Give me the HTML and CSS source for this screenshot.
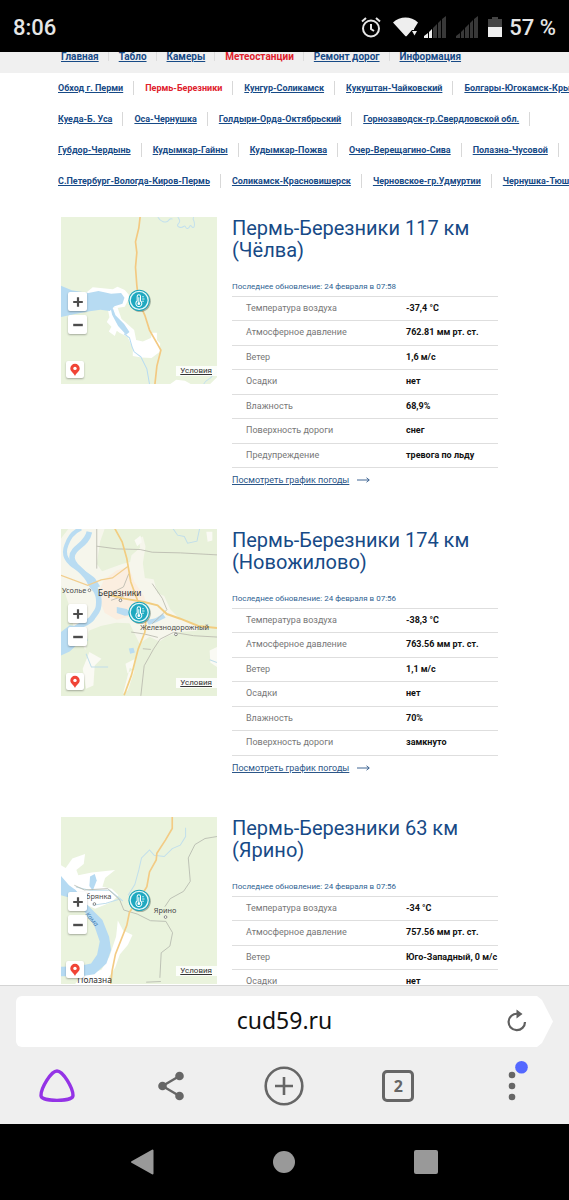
FILE: index.html
```html
<!DOCTYPE html>
<html lang="ru">
<head>
<meta charset="utf-8">
<meta name="viewport" content="width=device-width, initial-scale=1">
<title>Метеостанции</title>
<link rel="stylesheet" href="styles.css">
</head>
<body>
<svg class="defs" aria-hidden="true">
  <symbol id="marker" viewBox="0 0 72 72">
    <circle cx="38" cy="38" r="32" fill="#6b7b70" opacity=".55"/>
    <circle cx="35" cy="35" r="32" fill="#1fa5b9"/>
    <circle cx="35" cy="35" r="27" fill="#1fa9c0" stroke="#e4f8fa" stroke-width="4"/>
    <path d="M29 37V23a5 5 0 0 1 10 0v14a9 9 0 1 1-10 0Z" fill="none" stroke="#fff" stroke-width="3"/>
    <path d="M34 26v18" stroke="#fff" stroke-width="3"/>
    <circle cx="34" cy="45" r="4" fill="#fff"/>
    <path d="M44 24h5M44 31h7M44 38h5" stroke="#d6f3f6" stroke-width="3"/>
  </symbol>
  <symbol id="pin" viewBox="0 0 12 14">
    <path d="M6 0.8a4.7 4.7 0 0 1 4.7 4.7C10.700 8.500 7.500 9.500 6 13C4.500 9.500 1.300 8.500 1.300 5.500A4.700 4.700 0 0 1 6 .8Z" fill="#f04436"/>
    <circle cx="6" cy="5.400" r="1.700" fill="#fff"/>
  </symbol>
  <symbol id="plus" viewBox="0 0 10 10"><path d="M5 .2v9.600M.2 5h9.600" stroke="#4d4d4d" stroke-width="2.200"/></symbol>
  <symbol id="minus" viewBox="0 0 10 10"><path d="M.2 5h9.600" stroke="#4d4d4d" stroke-width="2.400"/></symbol>
  <symbol id="arrow" viewBox="0 0 13 6"><path d="M0 3h12M9.500 .8 12.300 3 9.500 5.200" fill="none" stroke="#2b5688" stroke-width=".9"/></symbol>
</svg>

<header class="status">
  <time class="clock">8:06</time>
  <div class="indicators">
    <svg class="i-alarm" viewBox="0 0 20 22"><g fill="none" stroke="#e6e6e6" stroke-width="2"><circle cx="10" cy="12.500" r="8"/><path d="M10 8v5l3 2M1 5.500 5 2M19 5.500 15 2"/></g></svg>
    <svg class="i-wifi" viewBox="0 0 25 20"><path d="M0 5.500C7-1.200 18-1.200 25 5.500L21 12v1h-2l-5.500 6.300h-1Z" fill="#eee"/><path d="M19 14h5l-2.500 4.500Z" fill="#eee"/></svg>
    <svg class="i-signal" viewBox="0 0 22 22"><path d="M0 22V20l4-3v5ZM5 22v-6l3-3v9Z" fill="#eee"/><path d="M9 22V12l4-4v14ZM14 22V7l3-3v18ZM18 22V3l4-3v22Z" fill="#383838"/></svg>
    <svg class="i-signal" viewBox="0 0 22 22"><path d="M0 22V20l4-3v5ZM5 22v-6l3-3v9ZM9 22V12l4-4v14ZM14 22V7l3-3v18ZM18 22V3l4-3v22Z" fill="#383838"/></svg>
    <svg class="i-battery" viewBox="0 0 14 20"><path d="M0 2h4V0h6v2h4v8H0Z" fill="#444"/><path d="M0 10h14v10H0Z" fill="#eee"/></svg>
    <span>57 %</span>
  </div>
</header>

<main class="page">
  <nav class="menu">
    <a href="#">Главная</a><a href="#">Табло</a><a href="#">Камеры</a><a class="current" href="#">Метеостанции</a><a href="#">Ремонт дорог</a><a href="#">Информация</a>
  </nav>
  <nav class="routes">
    <div class="route-row"><a href="#">Обход г. Перми</a><a class="current" href="#">Пермь-Березники</a><a href="#">Кунгур-Соликамск</a><a href="#">Кукуштан-Чайковский</a><a href="#">Болгары-Югокамск-Кры</a></div>
    <div class="route-row"><a href="#">Куеда-Б. Уса</a><a href="#">Оса-Чернушка</a><a href="#">Голдыри-Орда-Октябрьский</a><a href="#">Горнозаводск-гр.Свердловской обл.</a></div>
    <div class="route-row"><a href="#">Губдор-Чердынь</a><a href="#">Кудымкар-Гайны</a><a href="#">Кудымкар-Пожва</a><a href="#">Очер-Верещагино-Сива</a><a href="#">Полазна-Чусовой</a></div>
    <div class="route-row"><a href="#">С.Петербург-Вологда-Киров-Пермь</a><a href="#">Соликамск-Красновишерск</a><a href="#">Черновское-гр.Удмуртии</a><a href="#">Чернушка-Тюш</a></div>
  </nav>

  <div class="stations">
    <section class="station">
      <div class="map">
        <svg class="map-art" viewBox="35 34 467 503" preserveAspectRatio="xMidYMid slice">
          <path d="M35 34h467v503H35Z" fill="#eaf3dd"/>
          <path d="M110 262l20-16 60 6 14-8 22 10 12 14 0 12-12 24-24 4Z" fill="#fff"/>
          <path d="M174 306l30 0 12 34 38 34 6 30 20 4 24-10 4-16 14 0 0 22 10 10-2 26-24 18-30-2-26-4 0-24-16-34-24-12-8-6-6 16-18-14 8-14-14-14 8-14Z" fill="#fff"/>
          <path d="M360 537l20-14 26 3 20 11Z" fill="#fff"/>
          <path d="M480 537l22-22v22Z" fill="#fff"/>
          <path d="M35 241l32 14 50 8 30-6 38 8 30-2 10 14-6 18-24 8-14 14-28-4-32 5-44 8-42 9Z" fill="#b7dbf2"/>
          <path d="M190 308l8 22 26 26 16 24-10 8-24-26-18-34-4-18Z" fill="#b7dbf2"/>
          <path d="M224 385l16 12 8 28 6 14 20 15 18 36 8 46" fill="none" stroke="#b7dbf2" stroke-width="3"/>
          <path d="M325 36c8 14 24 18 30 12s6-10 14-6M384 34c6 10 10 14 2 22s8 14 16 8 4 8 12 6 6-14 12-6 10 0 8-12-6-6-2-16" fill="none" stroke="#c3e0ee" stroke-width="3"/>
          <path d="M462 537c4-16 20-14 26-26l14-12" fill="none" stroke="#c3e0ee" stroke-width="3"/>
          <path d="M272 34l-4 34-10 42 4 32-4 44 4 54 6 50 18 40 14 44 34 60-12 48-6 55" fill="none" stroke="#f3c981" stroke-width="5"/>
          <use href="#marker" x="234" y="250" width="72" height="72"/>
        </svg>
        <div class="zoomer"><button aria-label="Приблизить"><svg><use href="#plus"/></svg></button><button aria-label="Отдалить"><svg><use href="#minus"/></svg></button></div>
        <button class="locate" aria-label="Открыть на карте"><svg><use href="#pin"/></svg></button>
        <a class="terms" href="#">Условия</a>
      </div>
      <div class="info">
        <h2>Пермь-Березники 117 км (Чёлва)</h2>
        <p class="updated">Последнее обновление: 24 февраля в 07:58</p>
        <table>
          <tr><th scope="row">Температура воздуха</th><td>-37,4 °C</td></tr>
          <tr><th scope="row">Атмосферное давление</th><td>762.81 мм рт. ст.</td></tr>
          <tr><th scope="row">Ветер</th><td>1,6 м/с</td></tr>
          <tr><th scope="row">Осадки</th><td>нет</td></tr>
          <tr><th scope="row">Влажность</th><td>68,9%</td></tr>
          <tr><th scope="row">Поверхность дороги</th><td>снег</td></tr>
          <tr><th scope="row">Предупреждение</th><td>тревога по льду</td></tr>
        </table>
        <a class="graph" href="#"><span>Посмотреть график погоды</span><svg><use href="#arrow"/></svg></a>
      </div>
    </section>

    <section class="station">
      <div class="map">
        <svg class="map-art" viewBox="35 25 467 503" preserveAspectRatio="xMidYMid slice">
          <path d="M35 25h467v503H35Z" fill="#e8f1da"/>
          <path d="M58 25h108l-14 40-10 66 16 22 60-22 24-6 4-20 26-22-4-28 12-6 8 30-8 50 6 44 26 4 12 42 20 8 18 40 30 30 60 20-12 14-50 4-40 14-20 14-30-14-30 20-30-60-40-2-46 10-36 14-10 58-34-60-10-60-20-60-30-40-20-60Z" fill="#f6f6ec"/>
          <path d="M164 178l38-28 36-10 16 44 30 44 8 30-30 26-60 14-36-20-22-54Z" fill="#fbeee0"/>
          <path d="M228 430l28-14-4 30-18 12ZM255 60l18-14 4 20-14 12ZM470 35h18v26l-14 4ZM480 390l22-10v60l-20-14ZM120 395l-20 50 10 60 22-10 4-60 20-20ZM235 510l20-60-14-8-20 76Z" fill="#fafaf4"/>
          <path d="M120 35c-6 30-30 40-44 56s-8 36 10 52 30 28 36 44 24 18 26 50-6 36-20 56-60 24-60 50 16 20-4 30l-29 12" fill="none" stroke="#b9dcf2" stroke-width="17"/>
          <path d="M95 25c-30 14-36 30-44 50s-4 40 14 56 50 30 68 48l14 22" fill="none" stroke="#b9dcf2" stroke-width="12"/>
          <path d="M35 335l26-20 44 6 10 40-30 10-24 22-26 12Z" fill="#b9dcf2"/>
          <path d="M202 260l30 6 20 18-26 2-24-8ZM290 300l28-6 22-14 8 12-28 14-22 8ZM238 384l14-2 4 14-14 4Z" fill="#b9dcf2"/>
          <path d="M110 400l16 40h50M370 25l14 20 20 4 10 20 28-6 8-38M480 418l22 8" fill="none" stroke="#c0deea" stroke-width="3"/>
          <g fill="none" stroke="#b8b8ad" stroke-width="2.500"><path d="M142 25v120M142 78l60 8 70 2 36 8 84 2 110 6M308 190l30 44 14 34-24 24-20 18M502 350l-70-4-60-10-40 20-20 30-28 50-10 90M280 385l24 2M245 335l40 6 40 10M182 220l40-20 16-40M185 240l40-14"/></g>
          <path d="M35 165l80 30 40-16 34-6 46-34" fill="none" stroke="#f2ce8e" stroke-width="4"/>
          <path d="M196 25l22 40 14 50 12 70 20 55 26 50-4 46-20 50-20 78-22 60" fill="none" stroke="#f2cd80" stroke-width="5"/>
          <path d="M184 225l40 10 60 10 40 10 28 26 40 14 54 22 56 6" fill="none" stroke="#f2cd80" stroke-width="6"/>
          <g class="place"><text x="38" y="218">Усолье</text><text class="city" x="146" y="227">Березники</text><text x="272" y="330">Железнодорожный</text></g>
          <g fill="#fff" stroke="#555" stroke-width="2"><circle cx="120" cy="210" r="4"/><circle cx="213" cy="240" r="4"/><circle cx="379" cy="342" r="4"/></g>
          <use href="#marker" x="234" y="241" width="72" height="72"/>
        </svg>
        <div class="zoomer"><button aria-label="Приблизить"><svg><use href="#plus"/></svg></button><button aria-label="Отдалить"><svg><use href="#minus"/></svg></button></div>
        <button class="locate" aria-label="Открыть на карте"><svg><use href="#pin"/></svg></button>
        <a class="terms" href="#">Условия</a>
      </div>
      <div class="info">
        <h2>Пермь-Березники 174 км (Новожилово)</h2>
        <p class="updated">Последнее обновление: 24 февраля в 07:56</p>
        <table>
          <tr><th scope="row">Температура воздуха</th><td>-38,3 °C</td></tr>
          <tr><th scope="row">Атмосферное давление</th><td>763.56 мм рт. ст.</td></tr>
          <tr><th scope="row">Ветер</th><td>1,1 м/с</td></tr>
          <tr><th scope="row">Осадки</th><td>нет</td></tr>
          <tr><th scope="row">Влажность</th><td>70%</td></tr>
          <tr><th scope="row">Поверхность дороги</th><td>замкнуто</td></tr>
        </table>
        <a class="graph" href="#"><span>Посмотреть график погоды</span><svg><use href="#arrow"/></svg></a>
      </div>
    </section>

    <section class="station">
      <div class="map">
        <svg class="map-art" viewBox="35 34 467 503" preserveAspectRatio="xMidYMid slice">
          <path d="M35 34h467v503H35Z" fill="#eaf3dd"/>
          <path d="M35 180l14 8 20-28 38-14-4 30-22 18 6 16 40-8 70-8-30 24-8 26 28 6 20 20-20 20-50 20-44-20-30-40-28-20Z" fill="#fff"/>
          <path d="M205 345l16 30 28 14-14 30-24 28-14 40-20 30 12 20H76l20-24 60-20 24-40 20-60Z" fill="#fff"/>
          <path d="M35 212l24 28 20 14 30 40 50 50 20 50 6 40-14 40-36 32-40 6-60 0v-28l50-2 40-8 18-26 8-40-16-46-30-44-40-40-30-8Z" fill="#b5daf2"/>
          <path d="M122 214l14-8 6 20-12 30-10-14Z" fill="#b5daf2"/>
          <path d="M80 245l40 10 60 0 40 32M130 300l40-6 44-14M236 270l20-32 12-44 8-36 24-24 14 16 30 4 24-24 24-10 16-26 0-26" fill="none" stroke="#c1dfec" stroke-width="3"/>
          <path d="M502 94l-36 6-30 18-20 40 6 70-20 30-40 22-16 24M75 240l30 14 70-4 36 34 12 30 40 12 40 20 46 2 20 34-8 40-26 20-4 75M290 530l44-2" fill="none" stroke="#b4b8ad" stroke-width="2.500"/>
          <path d="M368 34v36l-20 34-26 40-2 20-20 36-8 44-22 36-30 40-8 40-34 86-10 50-4 40" fill="none" stroke="#f3cb84" stroke-width="5"/>
          <g class="place"><text x="97" y="281">обрянка</text><text x="313" y="322">Ярино</text><text class="city" x="84" y="532">Полазна</text><text class="river" x="106" y="328" transform="rotate(48 106 328)">Кама</text></g>
          <g fill="#fff" stroke="#555" stroke-width="2"><circle cx="135" cy="296" r="4"/><circle cx="348" cy="335" r="4"/></g>
          <use href="#marker" x="234" y="250" width="72" height="72"/>
        </svg>
        <div class="zoomer"><button aria-label="Приблизить"><svg><use href="#plus"/></svg></button><button aria-label="Отдалить"><svg><use href="#minus"/></svg></button></div>
        <button class="locate" aria-label="Открыть на карте"><svg><use href="#pin"/></svg></button>
        <a class="terms" href="#">Условия</a>
      </div>
      <div class="info">
        <h2>Пермь-Березники 63 км (Ярино)</h2>
        <p class="updated">Последнее обновление: 24 февраля в 07:56</p>
        <table>
          <tr><th scope="row">Температура воздуха</th><td>-34 °C</td></tr>
          <tr><th scope="row">Атмосферное давление</th><td>757.56 мм рт. ст.</td></tr>
          <tr><th scope="row">Ветер</th><td>Юго-Западный, 0 м/с</td></tr>
          <tr><th scope="row">Осадки</th><td>нет</td></tr>
        </table>
      </div>
    </section>
  </div>
</main>

<footer class="browser">
  <div class="address">
    <input type="text" value="cud59.ru" aria-label="Адрес">
    <button aria-label="Обновить"><svg class="i-reload" viewBox="0 0 20 24"><path d="M18 13a8.200 8.200 0 1 1-7.500-8.200" fill="none" stroke="#5f5f5f" stroke-width="2.200"/><path d="M9.500 .5 15.500 5 9.500 9.500Z" fill="#5f5f5f"/></svg></button>
  </div>
  <div class="tools">
    <button aria-label="Алиса"><svg class="i-alice" viewBox="0 0 36 34"><path d="M18 2C12 2 2 19 2 26.500C2 33 34 33 34 26.500C34 19 24 2 18 2Z" fill="none" stroke="#9433e6" stroke-width="3.400"/></svg></button>
    <button aria-label="Поделиться"><svg class="i-share" viewBox="0 0 26 30"><path d="M21.500 5 4.500 15l17 10" fill="none" stroke="#666" stroke-width="2.400"/><g fill="#666"><circle cx="21.500" cy="5" r="4.300"/><circle cx="4.500" cy="15" r="4.300"/><circle cx="21.500" cy="25" r="4.300"/></g></svg></button>
    <button aria-label="Новая вкладка"><svg class="i-add" viewBox="0 0 40 40"><path d="M20 11v18M11 20h18" stroke="#666" stroke-width="2.600"/><circle cx="20" cy="20" r="18.300" fill="none" stroke="#666" stroke-width="2.600"/></svg></button>
    <button aria-label="Вкладки"><span class="tabs">2</span></button>
    <button aria-label="Меню"><svg class="i-more" viewBox="0 0 40 40"><g fill="#666"><circle cx="20" cy="9" r="3.300"/><circle cx="20" cy="20" r="3.300"/><circle cx="20" cy="31" r="3.300"/></g><circle cx="29.500" cy="1.200" r="6.300" fill="#5468ff"/></svg></button>
  </div>
</footer>

<nav class="system">
  <button aria-label="Назад"><svg viewBox="0 0 26 26"><path d="M22.500 1.500v23L2 13Z" fill="#999" stroke="#999" stroke-width="2" stroke-linejoin="round"/></svg></button>
  <button aria-label="Домой"><svg viewBox="0 0 26 26"><circle cx="13" cy="13" r="11" fill="#999"/></svg></button>
  <button aria-label="Недавние"><svg viewBox="0 0 26 26"><rect x="1" y="1" width="24" height="24" rx="2" fill="#999"/></svg></button>
</nav>
</body>
</html>
```

FILE: styles.css
```css
* { box-sizing: border-box; }

body {
  margin: 0;
  height: 100vh;
  display: flex;
  flex-direction: column;
  overflow: hidden;
  background: #fff;
  font-family: Roboto, "Liberation Sans", sans-serif;
}

button {
  border: 0;
  padding: 0;
  background: none;
  display: flex;
  align-items: center;
  justify-content: center;
}

.defs { position: absolute; width: 0; height: 0; }

/* Status bar */
.status {
  flex: none;
  height: 52px;
  padding: 2px 13px 0;
  display: flex;
  align-items: center;
  justify-content: space-between;
  background: #000;
  color: #e6e6e6;
  font-size: 22px;
  font-weight: 500;
}
.indicators { display: flex; align-items: center; gap: 10px; }
.indicators span { margin-left: -3px; }
.i-alarm { width: 20px; height: 22px; }
.i-wifi { width: 25px; height: 20px; margin-left: 2px; margin-right: -4px; }
.i-signal { width: 22px; height: 22px; }
.i-battery { width: 14px; height: 20px; }

/* Site page */
.page { flex: 1; min-height: 0; overflow: hidden; }

.menu a, .routes a {
  color: #174a86;
  font-weight: 700;
  text-underline-offset: 1px;
  white-space: nowrap;
}
.menu .current, .routes .current { color: #e0212c; text-decoration: none; }

.menu {
  display: flex;
  align-items: flex-start;
  height: 21px;
  padding-left: 61px;
  background: #f0f0f0;
  font-size: 10px;
  line-height: 9px;
}
.menu a + a { border-left: 1px solid #dcdcdc; padding-left: 10px; margin-left: 9px; }

.routes { padding-left: 58px; overflow: hidden; }
.route-row {
  display: flex;
  align-items: center;
  height: 31px;
  padding-bottom: 2px;
  font-size: 9px;
  line-height: 14px;
}
.route-row a { padding-right: 10px; border-right: 1px solid #d8d8d8; margin-right: 11px; }

.stations {
  display: flex;
  flex-direction: column;
  gap: 36px;
  padding: 20px 71px 0 61px;
}
.station {
  display: grid;
  grid-template-columns: 156px 1fr;
  gap: 15px;
  align-items: start;
}

.map { position: relative; height: 167px; overflow: hidden; }
.map-art { display: block; width: 100%; height: 100%; }
.place { font-family: "Noto Sans", sans-serif; font-size: 22px; fill: #4b4b4b; }
.place .city { font-size: 25px; fill: #333; }
.place .river { font-size: 20px; font-style: italic; fill: #4c84b5; }

.zoomer {
  position: absolute;
  left: 7px;
  top: 75px;
  display: grid;
  gap: 4px;
}
.zoomer button, .locate {
  width: 19px;
  height: 19px;
  border-radius: 2px;
  background: #fff;
  box-shadow: 0 1px 2px rgba(0, 0, 0, .3);
}
.zoomer svg { width: 10px; height: 10px; }
.locate { position: absolute; left: 5px; bottom: 6px; width: 18px; height: 17px; }
.locate svg { width: 12px; height: 14px; }
.terms {
  position: absolute;
  right: 0;
  bottom: 8px;
  padding: 0 5px 0 4px;
  background: rgba(255, 255, 255, .85);
  color: #333;
  font-size: 8px;
  line-height: 10px;
}

.info h2 {
  margin: 0;
  color: #174a86;
  font-size: 20px;
  font-weight: 400;
  line-height: 22px;
}
.updated {
  margin: 21px 0 4px;
  color: #2f5f92;
  font-size: 8px;
  line-height: 10px;
}
table {
  width: 100%;
  border-collapse: separate;
  border-spacing: 0;
  table-layout: fixed;
  border-top: 1px solid #dedede;
  font-size: 9px;
  line-height: 12px;
  text-align: left;
}
tr { height: 24px; }
tr:nth-child(even) { height: 25px; }
th, td { padding: 0 0 2px; border-bottom: 1px solid #dedede; white-space: nowrap; }
th { width: 174px; padding-left: 14px; color: #777; font-weight: 400; }
td { color: #111; font-weight: 700; }
.graph {
  display: flex;
  align-items: center;
  gap: 8px;
  height: 25px;
  padding: 5px 0 6px;
  color: #2b5688;
  font-size: 9px;
  line-height: 14px;
  text-decoration: none;
}
.graph span { text-decoration: underline; text-underline-offset: 1px; }
.graph svg { width: 13px; height: 6px; }

/* Browser toolbar */
.browser {
  flex: none;
  padding-top: 10px;
  border-top: 1px solid #d4d4d4;
  background: #efefef;
}
.address {
  display: grid;
  grid-template-columns: 60px 1fr 60px;
  height: 51px;
  margin: 0 16px;
  border-radius: 6px 0 0 6px;
  background: #fff;
  clip-path: polygon(0 0, calc(100% - 16px) 0, calc(100% - 11px) 4px, 100% 50%, calc(100% - 11px) 47px, calc(100% - 16px) 100%, 0 100%);
}
.address input {
  grid-column: 2;
  min-width: 0;
  border: 0;
  padding: 0 0 4px;
  background: none;
  color: #111;
  font-family: "Noto Sans", sans-serif;
  font-size: 23px;
  text-align: center;
}
.address button { padding: 0 12px 2px 0; }
.i-reload { width: 20px; height: 24px; }
.tools { display: grid; grid-template-columns: repeat(5, 1fr); height: 77px; }
.tools svg { overflow: visible; }
.i-alice { width: 36px; height: 34px; }
.i-share { width: 26px; height: 30px; }
.i-add, .i-more { width: 40px; height: 40px; }
.tabs {
  width: 32px;
  height: 32px;
  border: 3px solid #666;
  border-radius: 5px;
  color: #666;
  font: 700 16px/26px "Noto Sans", sans-serif;
  text-align: center;
}

/* System navigation */
.system {
  flex: none;
  display: grid;
  grid-template-columns: repeat(3, 1fr);
  height: 76px;
  padding: 0 72px;
  background: #000;
}
.system svg { width: 26px; height: 26px; }
```
